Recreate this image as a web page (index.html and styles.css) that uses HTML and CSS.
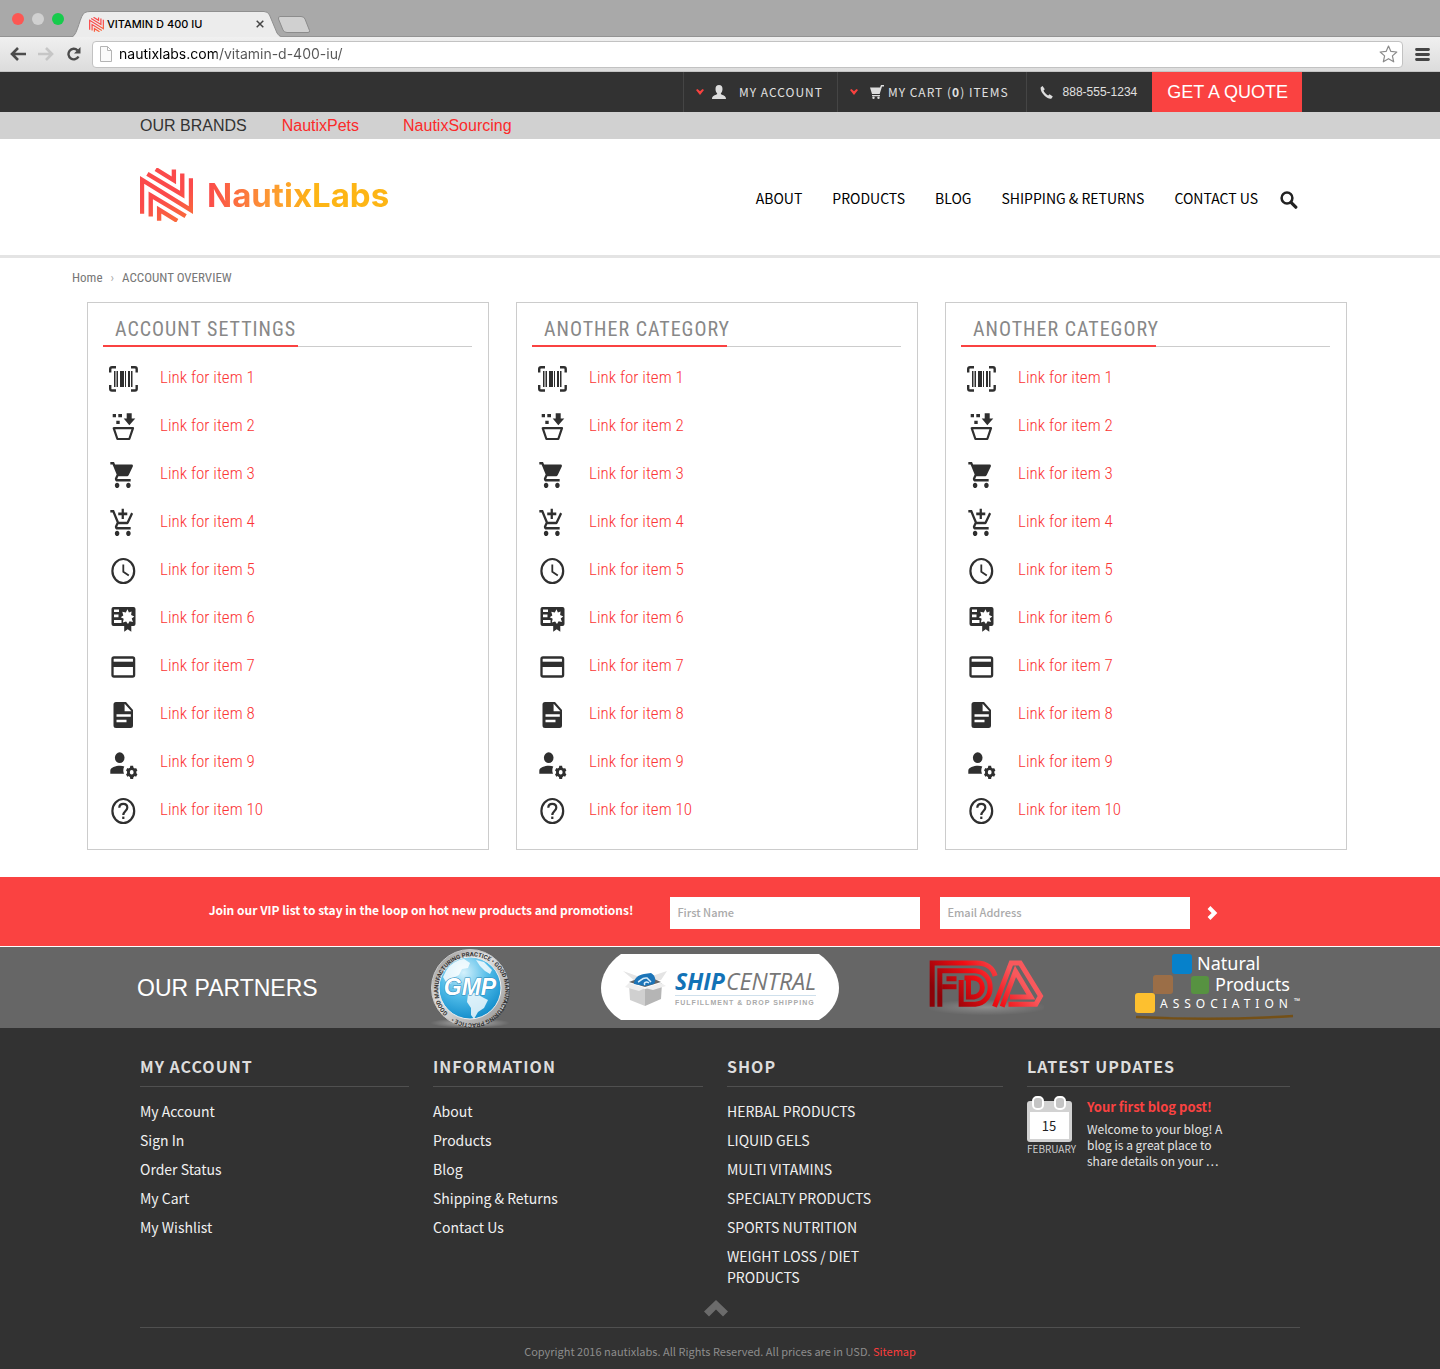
FILE: index.html
```html
<!DOCTYPE html>
<html lang="en">
<head>
<meta charset="utf-8">
<meta name="viewport" content="width=device-width, initial-scale=1">
<title>VITAMIN D 400 IU</title>
<link rel="stylesheet" href="styles.css">
</head>
<body>
<svg class="defs" aria-hidden="true">
  <defs>
    <linearGradient id="mark-fill" gradientUnits="userSpaceOnUse" x1="60" y1="90" x2="90" y2="165"><stop offset="0" stop-color="#fb4a4b"/><stop offset="1" stop-color="#f9693c"/></linearGradient>
    <symbol id="mark" viewBox="0 0 158 160">
      <g fill="none" stroke="url(#mark-fill)" stroke-width="13">
        <path d="M47 3L101 36V4"/><path d="M22 17L126 79V16"/><path d="M6 136V35L152 125V30"/><path d="M32 144V81L136 143"/><path d="M57 157V124L111 157"/>
      </g>
    </symbol>
    <symbol id="i-barcode" viewBox="0 0 30 32">
      <path fill="none" stroke="#2f2f2f" stroke-width="2.4" d="M2.200 9.500V6q0-1.800 1.800-1.800H8M23 4.200H27q1.700 0 1.700 1.800V9.500M28.700 22V25.700q0 1.800-1.700 1.800H23M8 27.500H4q-1.800 0-1.800-1.800V22"/>
      <path fill="#2f2f2f" d="M6 8h1.500v16H6zM8.500 8H10v16H8.500zM12 8h4v16h-4zM17 8h1v16h-1zM20 8h2v16h-2zM23 8h1.500v16H23z"/>
    </symbol>
    <symbol id="i-basket" viewBox="0 0 30 32">
      <path d="M4.700 3H8v3.300H4.700zM10.300 3H14v3.300h-3.700zM8.300 9.700h3.400V13H8.300zM18.700 2.300h5v5.200h3.600l-6 6.800-5.600-6.800h3z"/>
      <path fill="none" stroke="#2f2f2f" stroke-width="2.200" stroke-linejoin="round" d="M5.700 17.200H25L21.300 28H9.400z"/>
    </symbol>
    <symbol id="i-cart" viewBox="0 0 30 32">
      <path transform="matrix(1.130 0 0 1.300 1.200 .4)" d="M7 18c-1.100 0-1.990.9-1.990 2S5.900 22 7 22s2-.9 2-2-.9-2-2-2zM1 2v2h2l3.600 7.590-1.350 2.450c-.16.280-.25.610-.25.960 0 1.100.9 2 2 2h12v-2H7.420c-.14 0-.25-.11-.25-.25l.03-.12.900-1.630h7.450c.75 0 1.410-.41 1.750-1.030l3.580-6.490c.08-.14.120-.31.120-.48 0-.55-.45-1-1-1H5.210l-.94-2H1zm16 16c-1.100 0-1.990.9-1.990 2s.89 2 1.990 2 2-.9 2-2-.9-2-2-2z"/>
    </symbol>
    <symbol id="i-cart-add" viewBox="0 0 30 32">
      <path transform="matrix(1.130 0 0 1.300 1.200 .4)" d="M11 9h2V6h3V4h-3V1h-2v3H8v2h3v3zm-4 9c-1.100 0-1.990.9-1.990 2S5.900 22 7 22s2-.9 2-2-.9-2-2-2zm10 0c-1.100 0-1.990.9-1.990 2s.89 2 1.990 2 2-.9 2-2-.9-2-2-2zm-9.830-3.250l.03-.12.900-1.630h7.450c.75 0 1.410-.41 1.750-1.030l3.860-7.010L19.420 4h-.01l-1.100 2-2.760 5H8.530l-.13-.27L6.160 6l-.95-2-.94-2H1v2h2l3.600 7.590-1.350 2.450c-.16.280-.25.610-.25.960 0 1.100.9 2 2 2h12v-2H7.420c-.13 0-.25-.11-.25-.25z"/>
    </symbol>
    <symbol id="i-clock" viewBox="0 0 30 32">
      <g fill="none" stroke="#2f2f2f" stroke-width="2.200"><ellipse cx="15.300" cy="16" rx="10.900" ry="12"/><path stroke-width="1.800" d="M15.300 9.500V16.800L20.800 20.500"/></g>
    </symbol>
    <symbol id="i-certificate" viewBox="0 0 30 32">
      <path fill-rule="evenodd" d="M5.500 4h20q2 0 2 2v15q0 2-2 2h-2.200v5.700l-3.600-2.400-3.500 2.400V23H5.500q-2 0-2-2V6q0-2 2-2zM6 6.500v2.600h5V6.500zM6 11.500v2.800h4.500v-2.800zM6 17v3h7.500v-3zM19.500 6.200l-1.700 3.300-3.500-.7 1 3.600-2.600 1.800 3 1.600-.8 3.700 3.200-1.100 1.900 2.600 1.600-2.700 3.400.6-1.300-3.400 2.600-2-3.200-1.500.5-3.500-2.700 1z"/>
    </symbol>
    <symbol id="i-card" viewBox="0 0 30 32">
      <rect x="4.500" y="6.500" width="21.600" height="19" rx="1.500" fill="none" stroke="#2f2f2f" stroke-width="2.300"/><path d="M4 10.700h23V16H4z"/>
    </symbol>
    <symbol id="i-doc" viewBox="0 0 30 32">
      <path fill-rule="evenodd" d="M8 3H18l7 8v15.500q0 2.500-2.500 2.500H8Q5.500 29 5.500 26.500v-21Q5.500 3 8 3zM16.600 4.700V12.300H23.400zM8.500 15.300v2.400h14.300v-2.400zM8.500 20.700v2.500h10v-2.500z"/>
    </symbol>
    <symbol id="i-user-cog" viewBox="0 0 30 32">
      <ellipse cx="11.700" cy="10.700" rx="4.800" ry="5.400"/><path d="M2.300 26.700v-3c0-3.300 5.500-5 9.700-5 1.800 0 3.200.3 4.300.7-1.300 2.500-1.300 5-.3 7.300z"/>
      <ellipse cx="23.700" cy="25.300" rx="3.300" ry="3.700" fill="none" stroke="#2f2f2f" stroke-width="2.800"/>
      <path d="M22.300 18.700h2.800l.5 3h-3.800zM22.300 32h2.800l.5-3h-3.800zM18 23.500l1.300-2.500 2.600 1.200-1.600 3.200zM29.400 23.500L28.100 21l-2.600 1.200 1.600 3.200zM18 27.200l1.300 2.500 2.600-1.200-1.600-3.200zM29.400 27.200l-1.300 2.500-2.600-1.200 1.600-3.200z"/>
    </symbol>
    <symbol id="i-help" viewBox="0 0 30 32">
      <g fill="none" stroke="#2f2f2f" stroke-width="2.200"><ellipse cx="15.300" cy="16" rx="10.900" ry="12"/><path d="M11.300 12.800C11.300 10 13.100 8.800 15.300 8.800s4 1.400 4 3.900c0 3.100-4 3.500-4 7.300"/></g><path d="M14.200 21.600h2.200V24h-2.200z"/>
    </symbol>
    <symbol id="i-caret" viewBox="0 0 8 6"><path fill="#f9423f" d="M0 1L1.500 0 4 2.300 6.500 0 8 1 4 6z"/></symbol>
  </defs>
</svg>

<div class="browser">
  <div class="tabstrip">
    <div class="lights"><span class="light light-red"></span><span class="light light-grey"></span><span class="light light-green"></span></div>
    <div class="tab">
      <svg class="tab-shape" viewBox="0 0 210 26" preserveAspectRatio="none" aria-hidden="true"><path fill="#ececec" stroke="#8f8f8f" d="M0 26C6 24 8 3 13 1.500Q15 .5 18 .5H192Q196 .5 197.500 4L205 22Q206.500 25 210 26"/></svg>
      <svg class="tab-icon" aria-hidden="true"><use href="#mark"/></svg>
      <span class="tab-title">VITAMIN D 400 IU</span>
      <button class="tab-close" type="button" aria-label="Close tab"><svg width="8" height="8" viewBox="0 0 8 8"><path stroke="#444" stroke-width="1.500" d="M.7.7l6.600 6.600M7.300.7L.7 7.300"/></svg></button>
    </div>
    <button class="new-tab" type="button" aria-label="New tab"><svg width="34" height="18" viewBox="0 0 34 18"><path fill="#d0d0d0" stroke="#8c8c8c" d="M3 .5H24Q27 .5 28 3L32.500 14.500Q33 16.500 31 16.500H10Q7 16.500 6 14L1.500 3Q1 .5 3 .5z"/></svg></button>
  </div>
  <div class="toolbar">
    <button type="button" aria-label="Back"><svg width="16" height="14" viewBox="0 0 16 14"><path fill="none" stroke="#4c4c4c" stroke-width="2.600" d="M16 7H2.500M8 1L2 7l6 6"/></svg></button>
    <button type="button" aria-label="Forward"><svg width="16" height="14" viewBox="0 0 16 14"><path fill="none" stroke="#c6c6c6" stroke-width="2.600" d="M0 7h13.500M8 1l6 6-6 6"/></svg></button>
    <button type="button" aria-label="Reload"><svg width="16" height="14" viewBox="0 0 16 14"><path fill="none" stroke="#4c4c4c" stroke-width="2.400" d="M12.500 9.500A5.300 5.300 0 1 1 11.500 3.300"/><path fill="#4c4c4c" d="M14.500 0v6.500H8z"/></svg></button>
    <div class="address">
      <svg width="12" height="16" viewBox="0 0 12 16" aria-hidden="true"><path fill="#fafafa" stroke="#b4b4b4" d="M.5.5H7.500L11.500 4.500V15.500H.5zM7.500.5V4.500H11.500"/></svg>
      <input class="url" type="text" aria-label="Address" value="nautixlabs.com/vitamin-d-400-iu/">
      <svg width="19" height="18" viewBox="0 0 19 18" aria-hidden="true"><path fill="#fff" stroke="#8b8b8b" stroke-width="1.200" stroke-linejoin="round" d="M9.500 1l2.400 5.400 5.900.6-4.400 3.900 1.300 5.900-5.200-3.100-5.200 3.100 1.300-5.900L1.200 7l5.900-.6z"/></svg>
    </div>
    <button class="menu" type="button" aria-label="Menu"><svg width="15" height="13" viewBox="0 0 15 13"><path stroke="#444" stroke-width="2.800" stroke-linecap="round" d="M1.500 1.500h12M1.500 6.500h12M1.500 11.500h12"/></svg></button>
  </div>
</div>

<div class="topbar">
  <a class="top-item top-account" href="#"><svg width="8" height="6" aria-hidden="true"><use href="#i-caret"/></svg><svg class="top-user" width="14" height="14" viewBox="0 0 14 14" aria-hidden="true"><path fill="#ddd" d="M7 0c2.300 0 3.500 1.600 3.500 4 0 1.700-.6 3.300-1.600 4.200v1.100c2 .9 5.100 1.500 5.100 4.700H0c0-3.200 3.100-3.800 5.100-4.700V8.200C4.100 7.300 3.500 5.700 3.500 4 3.500 1.600 4.700 0 7 0z"/></svg>MY ACCOUNT</a>
  <a class="top-item top-cart" href="#"><svg width="8" height="6" aria-hidden="true"><use href="#i-caret"/></svg><svg class="top-basket" width="14" height="14" viewBox="0 0 14 14" aria-hidden="true"><path fill="#ddd" d="M0 2.500h10L11 0h3v1.400h-2L9.700 9H2L1.700 8zM2 10h8v1.200H2z"/><circle cx="3.500" cy="12.800" r="1.200" fill="#ddd"/><circle cx="8.500" cy="12.800" r="1.200" fill="#ddd"/></svg><span>MY CART (<b>0</b>) ITEMS</span></a>
  <a class="top-item top-phone" href="#"><svg width="13" height="13" viewBox="0 0 13 13" aria-hidden="true"><path fill="#ddd" d="M.8 1.200L2.600 0l2.200 3.200L3.500 4.600c.8 2 2.600 3.900 4.600 4.800l1.500-1.200 3.200 2.200-1.300 2.100c-1.300 1-4.300-.2-6.900-2.700C1.500 7 .100 3.200.8 1.200z"/></svg>888-555-1234</a>
  <a class="quote" href="#">GET A QUOTE</a>
</div>

<nav class="brands" aria-label="Our brands">
  <span>OUR BRANDS</span><a class="brand-pets" href="#">NautixPets</a><a class="brand-sourcing" href="#">NautixSourcing</a>
</nav>

<header class="header">
  <a class="logo" href="#"><svg class="logo-mark" aria-hidden="true"><use href="#mark"/></svg><span class="logo-text">NautixLabs</span></a>
  <nav class="nav" aria-label="Main">
    <a href="#">ABOUT</a><a href="#">PRODUCTS</a><a href="#">BLOG</a><a href="#">SHIPPING &amp; RETURNS</a><a href="#">CONTACT US</a>
    <button class="search" type="button" aria-label="Search"><svg width="18" height="18" viewBox="0 0 18 18"><circle cx="7" cy="7" r="5.400" fill="none" stroke="#222" stroke-width="2.500"/><path stroke="#222" stroke-width="3.200" stroke-linecap="round" d="M11.500 11.800L15.800 16.200"/></svg></button>
  </nav>
</header>

<main>
  <nav class="crumbs" aria-label="Breadcrumb"><a href="#">Home</a><span class="sep">›</span><span class="here">ACCOUNT OVERVIEW</span></nav>
  <div class="cards">
    <section class="card">
      <h2><span>ACCOUNT SETTINGS</span></h2>
      <ul>
        <li><svg><use href="#i-barcode"/></svg><a href="#">Link for item 1</a></li>
        <li><svg><use href="#i-basket"/></svg><a href="#">Link for item 2</a></li>
        <li><svg><use href="#i-cart"/></svg><a href="#">Link for item 3</a></li>
        <li><svg><use href="#i-cart-add"/></svg><a href="#">Link for item 4</a></li>
        <li><svg><use href="#i-clock"/></svg><a href="#">Link for item 5</a></li>
        <li><svg><use href="#i-certificate"/></svg><a href="#">Link for item 6</a></li>
        <li><svg><use href="#i-card"/></svg><a href="#">Link for item 7</a></li>
        <li><svg><use href="#i-doc"/></svg><a href="#">Link for item 8</a></li>
        <li><svg><use href="#i-user-cog"/></svg><a href="#">Link for item 9</a></li>
        <li><svg><use href="#i-help"/></svg><a href="#">Link for item 10</a></li>
      </ul>
    </section>
    <section class="card">
      <h2><span>ANOTHER CATEGORY</span></h2>
      <ul>
        <li><svg><use href="#i-barcode"/></svg><a href="#">Link for item 1</a></li>
        <li><svg><use href="#i-basket"/></svg><a href="#">Link for item 2</a></li>
        <li><svg><use href="#i-cart"/></svg><a href="#">Link for item 3</a></li>
        <li><svg><use href="#i-cart-add"/></svg><a href="#">Link for item 4</a></li>
        <li><svg><use href="#i-clock"/></svg><a href="#">Link for item 5</a></li>
        <li><svg><use href="#i-certificate"/></svg><a href="#">Link for item 6</a></li>
        <li><svg><use href="#i-card"/></svg><a href="#">Link for item 7</a></li>
        <li><svg><use href="#i-doc"/></svg><a href="#">Link for item 8</a></li>
        <li><svg><use href="#i-user-cog"/></svg><a href="#">Link for item 9</a></li>
        <li><svg><use href="#i-help"/></svg><a href="#">Link for item 10</a></li>
      </ul>
    </section>
    <section class="card">
      <h2><span>ANOTHER CATEGORY</span></h2>
      <ul>
        <li><svg><use href="#i-barcode"/></svg><a href="#">Link for item 1</a></li>
        <li><svg><use href="#i-basket"/></svg><a href="#">Link for item 2</a></li>
        <li><svg><use href="#i-cart"/></svg><a href="#">Link for item 3</a></li>
        <li><svg><use href="#i-cart-add"/></svg><a href="#">Link for item 4</a></li>
        <li><svg><use href="#i-clock"/></svg><a href="#">Link for item 5</a></li>
        <li><svg><use href="#i-certificate"/></svg><a href="#">Link for item 6</a></li>
        <li><svg><use href="#i-card"/></svg><a href="#">Link for item 7</a></li>
        <li><svg><use href="#i-doc"/></svg><a href="#">Link for item 8</a></li>
        <li><svg><use href="#i-user-cog"/></svg><a href="#">Link for item 9</a></li>
        <li><svg><use href="#i-help"/></svg><a href="#">Link for item 10</a></li>
      </ul>
    </section>
  </div>
</main>

<form class="vip">
  <p>Join our VIP list to stay in the loop on hot new products and promotions!</p>
  <input type="text" placeholder="First Name" aria-label="First Name">
  <input type="email" placeholder="Email Address" aria-label="Email Address">
  <button type="button" aria-label="Join"><svg width="12" height="14" viewBox="0 0 12 14"><path fill="none" stroke="#fff" stroke-width="4" d="M2 1.500L7.500 7 2 12.500"/></svg></button>
</form>

<section class="partners">
  <h2>OUR PARTNERS</h2>
  <svg width="80" height="80" viewBox="0 0 80 80" role="img" aria-label="GMP Good Manufacturing Practice">
    <defs>
      <radialGradient id="globe" cx=".4" cy=".25" r=".8"><stop offset="0" stop-color="#d4f1fc"/><stop offset=".5" stop-color="#4fbbe8"/><stop offset="1" stop-color="#0c88c8"/></radialGradient>
      <linearGradient id="rim" x1="0" y1="0" x2="1" y2="1"><stop offset="0" stop-color="#8a8a8a"/><stop offset=".4" stop-color="#e2e2e2"/><stop offset="1" stop-color="#8e8e8e"/></linearGradient>
      <radialGradient id="glow"><stop offset="0" stop-color="#fff" stop-opacity=".5"/><stop offset="1" stop-color="#fff" stop-opacity="0"/></radialGradient>
      <path id="ring" d="M18 65.500A33.500 33.500 0 1 1 18.100 65.600"/>
    </defs>
    <ellipse cx="40" cy="75" rx="40" ry="5" fill="url(#glow)"/>
    <circle cx="40" cy="40" r="38.500" fill="url(#rim)" stroke="#c9c9c9"/>
    <circle cx="40" cy="40" r="31" fill="url(#globe)" stroke="#eee"/>
    <path fill="#fff" opacity=".8" d="M16 23c4-7 11-11 18-12l6 4-2 5-6 1-3 6-6 3-2 6-5-2-3-5zM46 12l8 2 8 8-2 4-5-3-5-5zM38 46l7-1 9 5 4 2-4 8-6 4-4 7-3-4v-7l-4-6z"/>
    <text class="ring-text"><textPath href="#ring">GOOD MANUFACTURING PRACTICE • GOOD MANUFACTURING PRACTICE •</textPath></text>
    <text class="gmp-text" x="40" y="47" text-anchor="middle">GMP</text>
  </svg>
  <svg width="238" height="68" viewBox="0 0 238 68" role="img" aria-label="ShipCentral">
    <path fill="#fff" d="M20 0H218C231 9 238 22 238 34S231 58 218 66H20C7 58 0 46 0 34S7 9 20 0z"/>
    <path fill="#e4e4e4" d="M22 17l12 10 26-1 6-9-12 4-18 1z"/><path fill="#666" d="M28 28l16 5 16-5-9-4-15 1z"/>
    <path fill="#1b74b8" d="M33 30c0-6 4-9 10-10l7-1c5 3 5 8 3 11l-9 2z"/><path fill="none" stroke="#d9edfa" stroke-width="1.500" d="M37 28c3-1 4-5 9-4l4 4M44 31c-2-2 1-4 4-2"/>
    <path fill="#d0d0d0" d="M28 30l16 5v17l-15-6z"/><path fill="#b5b5b5" d="M44 35l17-6-1 16-16 7z"/><path fill="#eee" d="M28 29l-4 4 14 4 6-3zM60 29l5 3-13 4-8-2z"/>
    <text class="ship-a" x="74" y="36">SHIP</text><text class="ship-b" x="125" y="36">CENTRAL</text>
    <path stroke="#cfe0ec" d="M74 41.500h141"/>
    <text class="ship-c" x="74" y="51">FULFILLMENT &amp; DROP SHIPPING</text>
  </svg>
  <svg width="115" height="56" viewBox="-2 -2 344 168" role="img" aria-label="FDA">
    <defs><linearGradient id="fda" gradientUnits="userSpaceOnUse" x1="60" y1="138" x2="220" y2="0"><stop offset="0" stop-color="#8c0208"/><stop offset=".55" stop-color="#f00d13"/><stop offset="1" stop-color="#f8585c"/></linearGradient></defs>
    <ellipse cx="170" cy="140" rx="185" ry="24" fill="url(#glow)" opacity=".5"/>
    <g fill="none" stroke="url(#fda)" stroke-width="15">
      <path d="M7 138V7H140C172 7 190 24 196 46"/>
      <path d="M30 138V30H136C196 34 196 126 136 131H94V58"/>
      <path d="M50 54H80M37 78H80"/>
      <path d="M116 58V109H132C166 104 166 56 132 52H104"/>
      <path d="M194 138L244 7H271L332 106 318 131H236"/>
      <path d="M217 138L257 32 303 109H240"/>
    </g>
  </svg>
  <svg class="npa-logo" width="167" height="68" viewBox="0 0 167 68" role="img" aria-label="Natural Products Association">
    <rect x="37" y="0" width="20" height="20" rx="3" fill="#0681cb"/><rect x="18" y="21" width="20" height="19" rx="3" fill="#9b6e47"/><rect x="56" y="22" width="18" height="18" rx="3" fill="#579241"/><rect x="0" y="39" width="20" height="20" rx="3" fill="#fdc02f"/>
    <text class="npa" x="62" y="16">Natural</text><text class="npa" x="80" y="37">Products</text><text class="npa-small" x="25" y="54">ASSOCIATION</text><text class="npa-tm" x="159" y="50">™</text>
    <path fill="none" stroke="#745017" stroke-width="2.500" d="M1 63Q80 67 158 62"/>
  </svg>
</section>

<footer class="footer">
  <div class="columns">
    <section><h3>MY ACCOUNT</h3><ul><li><a href="#">My Account</a></li><li><a href="#">Sign In</a></li><li><a href="#">Order Status</a></li><li><a href="#">My Cart</a></li><li><a href="#">My Wishlist</a></li></ul></section>
    <section><h3>INFORMATION</h3><ul><li><a href="#">About</a></li><li><a href="#">Products</a></li><li><a href="#">Blog</a></li><li><a href="#">Shipping &amp; Returns</a></li><li><a href="#">Contact Us</a></li></ul></section>
    <section><h3>SHOP</h3><ul class="shop"><li><a href="#">HERBAL PRODUCTS</a></li><li><a href="#">LIQUID GELS</a></li><li><a href="#">MULTI VITAMINS</a></li><li><a href="#">SPECIALTY PRODUCTS</a></li><li><a href="#">SPORTS NUTRITION</a></li><li><a href="#">WEIGHT LOSS / DIET PRODUCTS</a></li></ul></section>
    <section><h3>LATEST UPDATES</h3>
      <article class="post">
        <div class="date"><svg width="45" height="46" viewBox="0 0 45 46" role="img" aria-label="15"><rect y="5" width="45" height="41" rx="3" fill="#d2d2d2"/><path fill="#fff" d="M3 16h39v27H3z"/><rect x="6" y="1" width="10" height="12" rx="4" fill="#c4c4c4" stroke="#fff" stroke-width="2"/><rect x="28" y="1" width="10" height="12" rx="4" fill="#c4c4c4" stroke="#fff" stroke-width="2"/><text class="day" x="22" y="35" text-anchor="middle">15</text></svg><span>FEBRUARY</span></div>
        <div class="post-body"><a href="#">Your first blog post!</a><p>Welcome to your blog! A blog is a great place to share details on your …</p></div>
      </article>
    </section>
  </div>
  <a class="to-top" href="#" aria-label="Back to top"><svg width="24" height="17" viewBox="0 0 24 17"><path fill="#6b6b6b" d="M12 0L24 11.500 19 16.500 12 9.500 5 16.500 0 11.500z"/></svg></a>
  <p class="copyright">Copyright 2016 nautixlabs. All Rights Reserved. All prices are in USD. <a href="#">Sitemap</a></p>
</footer>
</body>
</html>
```
FILE: styles.css
```css
:root {
  --red: #fa4241;
  --dark: #323232;
  --sans: "Noto Sans CJK SC", "Noto Sans", sans-serif;
  --condensed: "Roboto Condensed", Roboto, sans-serif;
  --helvetica: "Liberation Sans", Arial, sans-serif;
}
* { box-sizing: border-box; }
body { margin: 0; background: #fff; font-family: var(--sans); color: #222; }
a { color: inherit; text-decoration: none; }
h2, h3, p, ul { margin: 0; padding: 0; font-weight: 400; }
ul { list-style: none; }
button { display: flex; align-items: center; margin: 0; padding: 0; border: 0; background: none; cursor: pointer; }
svg { flex: none; }
.defs { position: absolute; width: 0; height: 0; }

/* Browser frame */
.browser { font-family: Inter, sans-serif; }
.tabstrip { display: flex; align-items: flex-end; height: 37px; padding-left: 12px; background: #a9a9a9; border-bottom: 1px solid #939393; }
.lights { display: flex; gap: 8px; padding-bottom: 11px; }
.light { width: 12px; height: 12px; border-radius: 50%; }
.light-red { background: #fc5753; }
.light-grey { background: #d0d0d0; }
.light-green { background: #17cb4c; }
.tab { position: relative; display: flex; align-items: center; width: 210px; height: 26px; margin-left: 8px; padding: 0 18px 0 17px; margin-bottom: -1px; }
.tab-shape { position: absolute; inset: 0; width: 100%; height: 100%; }
.tab-icon { position: relative; width: 15px; height: 15px; }
.tab-title { position: relative; flex: 1; margin-left: 3px; font-size: 11px; font-weight: 500; line-height: 16px; color: #000; }
.tab-close { position: relative; }
.new-tab { padding-bottom: 2px; margin-left: -5px; }
.toolbar { display: flex; align-items: center; gap: 12px; height: 35px; padding: 0 10px; background: linear-gradient(#f0f0f0, #dcdcdc); border-bottom: 1px solid #c4c4c4; }
.address { display: flex; flex: 1; align-items: center; height: 27px; margin-left: -2px; padding: 0 4px 0 7px; background: #fff; border: 1px solid #c2c2c2; border-radius: 4px; }
.url { flex: 1; min-width: 0; margin-left: 7px; padding: 0; border: 0; outline: 0; font: 14px/20px Inter, sans-serif; background: linear-gradient(90deg, #000 98px, #555 98px); background-clip: text; -webkit-background-clip: text; color: transparent; }

/* Dark account bar */
.topbar { display: flex; justify-content: flex-end; height: 40px; padding-right: 138px; background: var(--dark); color: #e0e0e0; }
.top-item { display: flex; align-items: center; border-left: 1px solid #454545; font-size: 12px; line-height: 18px; letter-spacing: 1px; white-space: nowrap; }
.top-account { padding: 0 14px 0 12px; }
.top-user { margin: 0 13px 0 8px; }
.top-cart { padding: 0 17px 0 12px; }
.top-basket { margin: 0 4px 0 12px; }
.top-phone { gap: 10px; padding: 0 15px 0 13px; font-family: var(--helvetica); letter-spacing: 0; }
.quote { display: flex; align-items: center; padding: 0 14px 0 15px; background: var(--red); color: #fff; font: 18px/24px var(--helvetica); }

.brands { display: flex; align-items: center; height: 27px; padding: 0 140px; background: #d1d1d1; font: 16px/24px var(--helvetica); color: #333; }
.brands a { color: #fb2a2a; }
.brand-pets { margin-left: 35px; }
.brand-sourcing { margin-left: 44px; }

/* Site header */
.header { display: flex; align-items: center; justify-content: space-between; padding: 29px 142px 33px 140px; border-bottom: 3px solid #e4e4e4; }
.logo { display: flex; align-items: center; gap: 14px; }
.logo-mark { width: 53px; height: 54px; }
.logo-text { font: 700 33px/40px Inter, sans-serif; background: linear-gradient(90deg, #fb4a4b, #fd9a33 35%, #fdb515 60%, #fdb515); background-clip: text; -webkit-background-clip: text; color: transparent; }
.nav { display: flex; align-items: center; gap: 30px; padding-top: 6px; font-size: 14px; line-height: 20px; color: #000; }
.search { margin: 4px 0 0 -8px; }

/* Account overview */
.crumbs { display: flex; gap: 8px; padding: 10px 72px 14px; font: 13px/20px var(--condensed); color: #777; }
.sep { color: #aaa; }
.cards { display: grid; grid-template-columns: repeat(3, 1fr); gap: 27px; padding: 0 93px 27px 87px; }
.card { padding: 14px 16px 15px 15px; border: 1px solid #ccc; }
.card h2 { border-bottom: 1px solid #ccc; font: 20px/24px var(--condensed); letter-spacing: 1px; color: #888; }
.card h2 span { display: block; width: 195px; margin-bottom: -1px; padding: 0 0 4px 12px; border-bottom: 2px solid var(--red); white-space: nowrap; }
.card ul { padding-top: 7px; }
.card li { display: flex; align-items: center; gap: 22px; height: 48px; padding-left: 5px; font: 300 17px/24px var(--condensed); color: #fb3535; }
.card li svg { width: 30px; height: 32px; margin-top: 2px; fill: #2f2f2f; }
.card li a { padding-bottom: 2px; }

/* VIP sign-up */
.vip { display: flex; align-items: center; justify-content: center; padding: 20px 20px 17px; background: var(--red); }
.vip p { margin-right: 37px; font-size: 12px; font-weight: 700; line-height: 26px; padding-bottom: 6px; color: #fff; }
.vip input { width: 250px; height: 32px; padding: 0 7px 2px; border: 0; border-radius: 0; background: #fff; font: 500 11px/18px var(--sans); }
.vip input + input { margin-left: 20px; }
.vip input::placeholder { color: #aaa; opacity: 1; }
.vip button { padding: 0 12px 0 17px; }

/* Partners */
.partners { display: flex; align-items: center; justify-content: space-between; height: 82px; padding: 0 138px 0 137px; background: #666; border-top: 1px solid #fff; }
.partners h2 { padding-right: 22px; font: 23px/32px var(--helvetica); color: #fff; }
.ring-text { font: 700 6px Roboto, sans-serif; fill: #333; }
.gmp-text { font: italic 700 23px "Liberation Sans", sans-serif; fill: #fff; stroke: #2b86b8; stroke-width: 1px; paint-order: stroke; }
.ship-a, .ship-b { font: italic 400 23px "Open Sans", sans-serif; fill: #777; }
.ship-a { font-weight: 700; fill: #1272b6; }
.ship-c { font: 700 7px var(--helvetica); letter-spacing: 1px; fill: #aaa; }
.npa-logo { overflow: visible; }
.npa { font: 18px "Noto Sans", sans-serif; fill: #fff; }
.npa-small { font: 12px "Noto Sans", sans-serif; letter-spacing: 5px; fill: #fff; }
.npa-tm { font: 8px "Noto Sans", sans-serif; fill: #fff; }

/* Footer */
.footer { padding: 26px 140px 5px; background: var(--dark); color: #e4e4e4; }
.columns { display: grid; grid-template-columns: 269fr 270fr 276fr 263fr; gap: 24px; padding-right: 10px; }
.columns h3 { padding-bottom: 8px; border-bottom: 1px solid #505050; font-size: 16px; font-weight: 700; line-height: 24px; letter-spacing: 1px; color: #ddd; }
.columns ul { padding-top: 14px; }
.columns li { margin-bottom: 8px; font-size: 14px; line-height: 21px; color: #f0f0f0; }
.shop { max-width: 170px; }
.post { display: flex; gap: 10px; padding-top: 9px; }
.date { display: flex; flex-direction: column; width: 50px; font-size: 10px; line-height: 14px; color: #ccc; }
.day { font: 13px var(--sans); fill: #222; }
.post-body { max-width: 140px; padding-top: 2px; }
.post-body a { display: block; font-size: 13px; font-weight: 700; line-height: 18px; color: var(--red); white-space: nowrap; }
.post-body p { margin-top: 5px; font-size: 12px; line-height: 16px; }
.to-top { display: flex; justify-content: center; padding: 4px 8px 10px 0; }
.copyright { padding: 13px 0 14px; border-top: 1px solid #505050; text-align: center; font-size: 11px; line-height: 20px; color: #8d8d8d; }
.copyright a { color: #fb3d3d; }
```
